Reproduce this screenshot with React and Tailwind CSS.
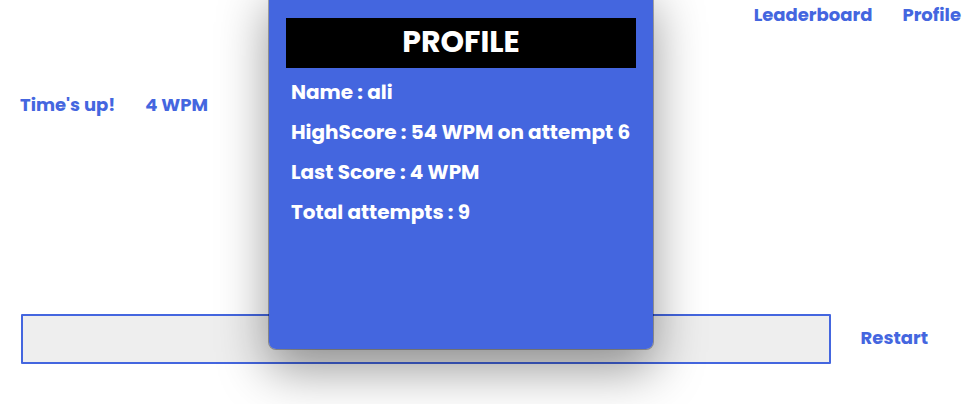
const stats = [
  "Name : ali",
  "HighScore : 54 WPM on attempt 6",
  "Last Score : 4 WPM",
  "Total attempts : 9",
];

function ProfileDialog() {
  return (
    <div className="pointer-events-none absolute inset-x-0 -top-4 flex justify-center pr-14">
      <section
        role="dialog"
        aria-labelledby="profile-title"
        className="pointer-events-auto min-h-[366px] w-[386px] rounded-lg border border-black/30 bg-[#4466df] bg-clip-padding px-[17px] pt-[33px] text-white shadow-[0_20px_50px_rgba(0,0,0,0.4)]"
      >
        <h1 id="profile-title" className="bg-black pb-0.5 text-center text-3xl leading-[48px]">
          PROFILE
        </h1>
        <ul className="mt-1 px-[5px] text-xl leading-10 whitespace-nowrap">
          {stats.map((line) => (
            <li key={line}>{line}</li>
          ))}
        </ul>
      </section>
    </div>
  );
}

export default function App() {
  return (
    <div className="relative h-screen overflow-hidden bg-white font-[Poppins,sans-serif] text-lg font-bold text-[#4466df]">
      <nav className="flex justify-end gap-[30px] pt-px pr-[17px]">
        <a href="#leaderboard">Leaderboard</a>
        <a href="#profile">Profile</a>
      </nav>
      <div className="mt-[62px] flex gap-[30px] px-5">
        <p>Time's up!</p>
        <p>4 WPM</p>
      </div>
      <div className="mt-[195px] flex items-center gap-[30px] pr-[50px] pl-[21px]">
        <input
          aria-label="Type here"
          disabled
          className="h-[50px] min-w-0 flex-1 rounded-[1px] border-2 border-[#4466df] bg-[#eeeeee] px-3"
        />
        <button type="button" className="pb-0.5">Restart</button>
      </div>
      <ProfileDialog />
    </div>
  );
}
